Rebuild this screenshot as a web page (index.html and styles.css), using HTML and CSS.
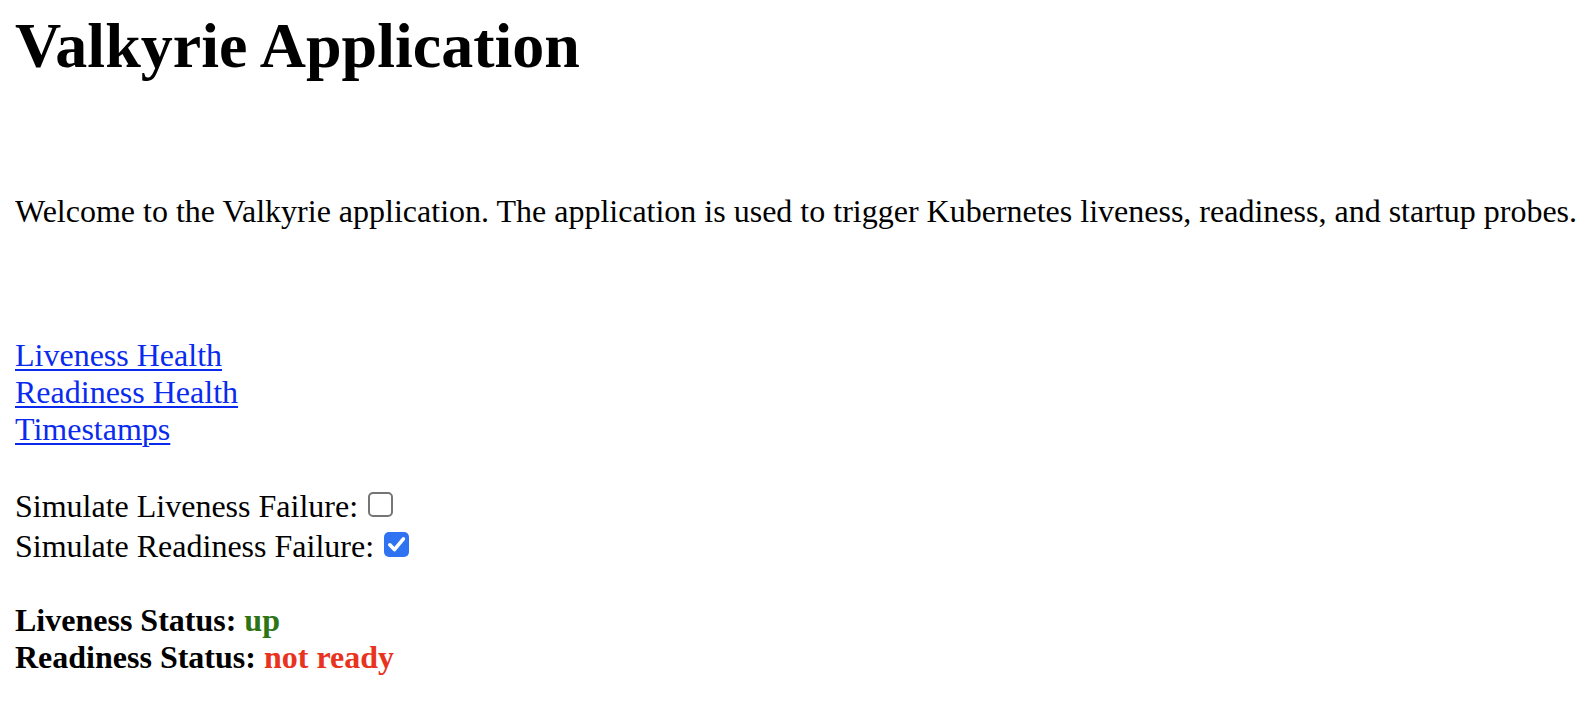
FILE: index.html
```html
<!DOCTYPE html>
<html lang="en">
<head>
<meta charset="utf-8">
<title>Valkyrie Application</title>
<link rel="stylesheet" href="styles.css">
</head>
<body>
<h1 class="title">Valkyrie Application</h1>
<p class="intro">Welcome to the Valkyrie application. The application is used to trigger Kubernetes liveness, readiness, and startup probes.</p>
<nav class="links">
  <a href="#">Liveness Health</a>
  <a href="#">Readiness Health</a>
  <a href="#">Timestamps</a>
</nav>
<div class="toggles">
  <div class="toggle">Simulate Liveness Failure: <span class="box"></span></div>
  <div class="toggle">Simulate Readiness Failure: <span class="box checked"><svg viewBox="0 0 25 25" width="25" height="25"><path d="M5.8 12.8 L10.4 17.6 L19.4 6.8" fill="none" stroke="#fff" stroke-width="3.6" stroke-linecap="round" stroke-linejoin="round"/></svg></span></div>
</div>
<div class="status">
  <div class="status-line">Liveness Status: <span class="up">up</span></div>
  <div class="status-line">Readiness Status: <span class="down">not ready</span></div>
</div>
</body>
</html>
```
FILE: styles.css
```css
html, body {
  background: #fff;
}
body {
  margin: 0 0 0 15px;
  font-family: "Liberation Serif", "Times New Roman", serif;
  font-size: 32px;
  color: #000;
}
.title {
  margin: 9px 0 0;
  font-size: 64px;
  font-weight: bold;
}
.intro {
  margin: 110px 0 0;
  white-space: nowrap;
}
.links {
  display: flex;
  flex-direction: column;
  align-items: flex-start;
  margin-top: 107px;
}
.links a {
  color: #0a2bee;
  text-decoration: underline;
  text-decoration-thickness: 2px;
  text-underline-offset: 3px;
}
.toggles {
  margin-top: 37.6px;
}
.toggle {
  line-height: 40px;
  white-space: nowrap;
}
.box {
  display: inline-block;
  vertical-align: baseline;
  box-sizing: border-box;
  width: 25px;
  height: 25px;
  margin-left: 2px;
  border: 2px solid #757575;
  border-radius: 5px;
  background: #fff;
}
.box.checked {
  border: none;
  background: #2f72f2;
}
.box svg {
  display: block;
  width: 25px;
  height: 25px;
}
.status {
  margin-top: 36.6px;
  font-weight: bold;
}
.up {
  color: #2e7417;
}
.down {
  color: #e8331f;
}
```
